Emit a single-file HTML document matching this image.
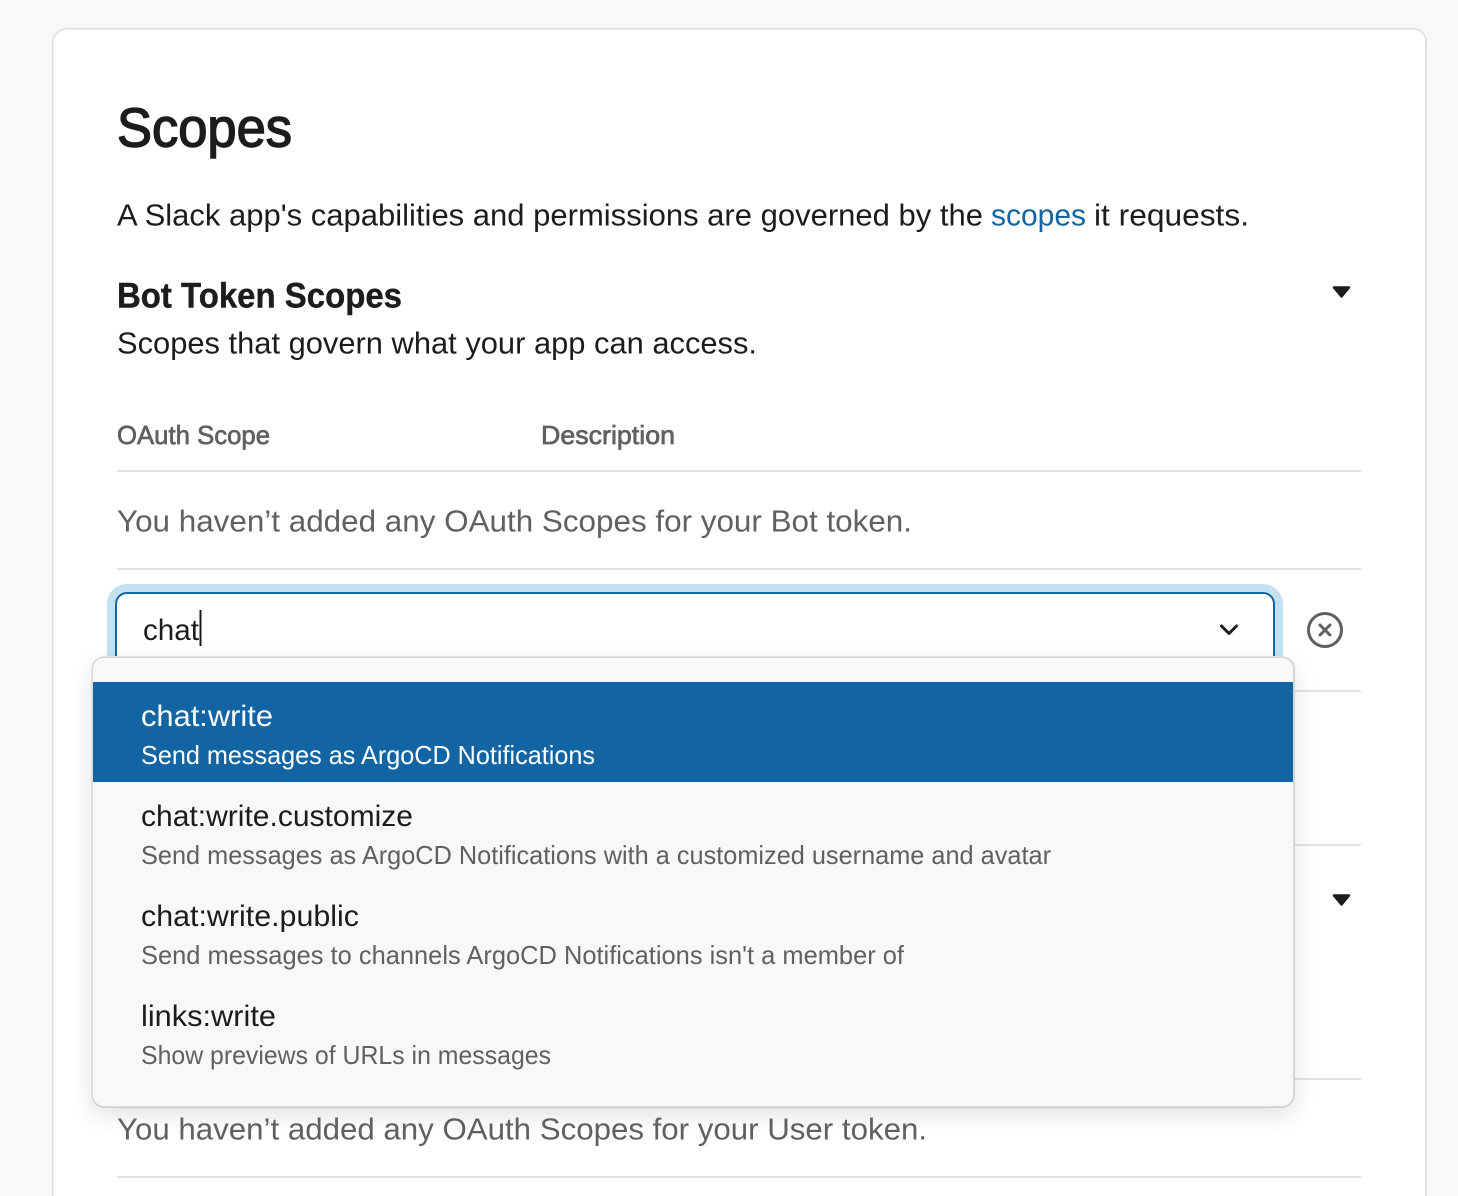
<!DOCTYPE html>
<html lang="en">
<head>
<meta charset="utf-8">
<title>Scopes</title>
<style>
html,body{margin:0;padding:0;width:1458px;height:1196px;overflow:hidden;background:#f8f8f8;}
#page{position:relative;width:1458px;height:1196px;overflow:hidden;background:#f8f8f8;}
.abs{position:absolute;box-sizing:border-box;}
#card{left:52px;top:28px;width:1375px;height:1168px;background:#fff;border:1px solid #dedede;border-bottom:0;border-radius:14px 14px 0 0;box-shadow:inset 1px 1px 0 #ececec,inset -1px 0 0 #e6e6e6;}
.ln{position:absolute;left:117px;width:1244px;height:2px;background:#e2e2e2;}
#glow{left:107px;top:584px;width:1176px;height:92px;border-radius:20px;background:#c3e1f1;}
#input{left:115px;top:592px;width:1160px;height:76px;border-radius:12px;background:#fff;border:2px solid #1264a3;}
#drop{left:92px;top:657px;width:1202px;height:450px;background:#f8f8f8;border:1px solid #d8d8d8;border-radius:12px;box-shadow:0 1px 0 #cfcfcf,1px 0 0 #d4d4d4,-.5px 0 0 #d8d8d8,0 -1px 0 #e2e2e2,0 8px 24px rgba(0,0,0,.12);overflow:hidden;}
#sel{position:absolute;left:0;top:24px;width:1200px;height:100px;background:#1264a3;}
svg{position:absolute;left:0;top:0;}
text{font-family:"Liberation Sans",sans-serif;}
</style>
</head>
<body>
<div id="page">
<div class="abs" id="card"></div>
<div class="ln" style="top:470px"></div>
<div class="ln" style="top:568px"></div>
<div class="ln" style="top:690px"></div>
<div class="ln" style="top:844px"></div>
<div class="ln" style="top:1078px"></div>
<div class="ln" style="top:1176px"></div>
<div class="abs" id="glow"></div>
<div class="abs" id="input"></div>
<div class="abs" id="drop"><div id="sel"></div></div>
<svg width="1458" height="1196" viewBox="0 0 1458 1196" xmlns="http://www.w3.org/2000/svg">
  <text x="117" y="146.500" font-size="55" fill="#1d1c1d" stroke="#1d1c1d" stroke-width="1.500" textLength="175" lengthAdjust="spacingAndGlyphs">Scopes</text>
  <text x="117" y="225.500" font-size="31" fill="#1d1c1d" textLength="866" lengthAdjust="spacingAndGlyphs">A Slack app's capabilities and permissions are governed by the</text>
  <text x="991" y="225.500" font-size="31" fill="#1264a3" textLength="95" lengthAdjust="spacingAndGlyphs">scopes</text>
  <text x="1094" y="225.500" font-size="31" fill="#1d1c1d" textLength="155" lengthAdjust="spacingAndGlyphs">it requests.</text>
  <text x="117" y="307.500" font-size="35" font-weight="700" fill="#1d1c1d" stroke="#1d1c1d" stroke-width=".4" textLength="285" lengthAdjust="spacingAndGlyphs">Bot Token Scopes</text>
  <text x="117" y="353.500" font-size="31" fill="#1d1c1d" textLength="640" lengthAdjust="spacingAndGlyphs">Scopes that govern what your app can access.</text>
  <text x="117" y="444" font-size="26" fill="#616061" stroke="#616061" stroke-width=".7" textLength="153" lengthAdjust="spacingAndGlyphs">OAuth Scope</text>
  <text x="541" y="444" font-size="26" fill="#616061" stroke="#616061" stroke-width=".7" textLength="134" lengthAdjust="spacingAndGlyphs">Description</text>
  <text x="117" y="531.500" font-size="31" fill="#616061" textLength="795" lengthAdjust="spacingAndGlyphs">You haven’t added any OAuth Scopes for your Bot token.</text>
  <text x="143" y="640" font-size="30" fill="#1d1c1d" textLength="56" lengthAdjust="spacingAndGlyphs">chat</text>
  <rect x="199.500" y="610" width="2" height="36" fill="#1d1c1d"/>

  <text x="141" y="726" font-size="30" fill="#ffffff" textLength="132" lengthAdjust="spacingAndGlyphs">chat:write</text>
  <text x="141" y="764" font-size="26" fill="#ffffff" textLength="454" lengthAdjust="spacingAndGlyphs">Send messages as ArgoCD Notifications</text>
  <text x="141" y="826" font-size="30" fill="#1d1c1d" textLength="272" lengthAdjust="spacingAndGlyphs">chat:write.customize</text>
  <text x="141" y="864" font-size="26" fill="#616061" textLength="910" lengthAdjust="spacingAndGlyphs">Send messages as ArgoCD Notifications with a customized username and avatar</text>
  <text x="141" y="926" font-size="30" fill="#1d1c1d" textLength="218" lengthAdjust="spacingAndGlyphs">chat:write.public</text>
  <text x="141" y="964" font-size="26" fill="#616061" textLength="763" lengthAdjust="spacingAndGlyphs">Send messages to channels ArgoCD Notifications isn't a member of</text>
  <text x="141" y="1026" font-size="30" fill="#1d1c1d" textLength="135" lengthAdjust="spacingAndGlyphs">links:write</text>
  <text x="141" y="1064" font-size="26" fill="#616061" textLength="410" lengthAdjust="spacingAndGlyphs">Show previews of URLs in messages</text>

  <text x="117" y="1139.500" font-size="31" fill="#616061" textLength="810" lengthAdjust="spacingAndGlyphs">You haven’t added any OAuth Scopes for your User token.</text>

  <path d="M1334 287.500H1349L1341.500 296.500Z" fill="#1d1c1d" stroke="#1d1c1d" stroke-width="2.500" stroke-linejoin="round"/>
  <path d="M1334 895.500H1349L1341.500 904.500Z" fill="#1d1c1d" stroke="#1d1c1d" stroke-width="2.500" stroke-linejoin="round"/>
  <path d="M1221.500 626L1229 633.500L1236.500 626" fill="none" stroke="#1d1c1d" stroke-width="3" stroke-linecap="round" stroke-linejoin="round"/>
  <circle cx="1325" cy="630" r="16.500" fill="none" stroke="#616061" stroke-width="3"/>
  <path d="M1320 625L1330 635M1330 625L1320 635" fill="none" stroke="#616061" stroke-width="3" stroke-linecap="round"/>
</svg>
</div>
</body>
</html>
